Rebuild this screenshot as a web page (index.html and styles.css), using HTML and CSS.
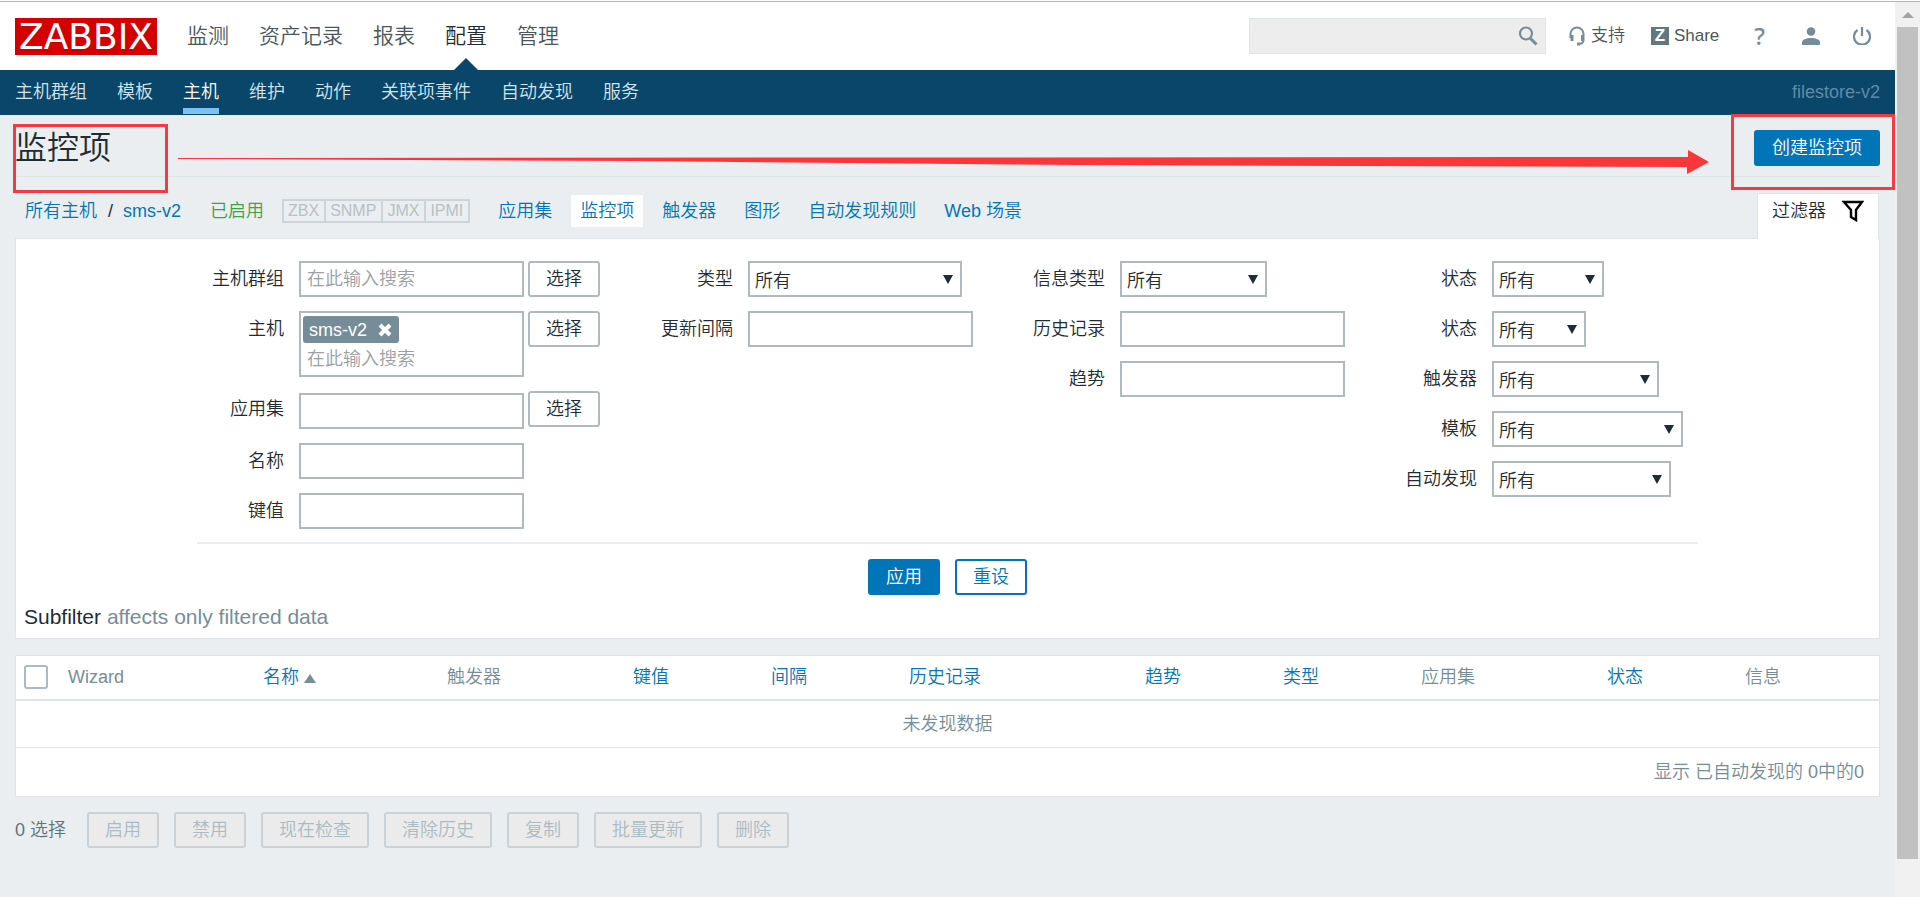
FILE: index.html
```html
<!DOCTYPE html>
<html lang="zh-CN">
<head>
<meta charset="utf-8">
<title>监控项</title>
<link rel="stylesheet" href="styles.css">
</head>
<body>
<div class="window">
<div class="page">
  <header class="header">
    <a class="logo" href="#">ZABBIX</a>
    <nav class="nav">
      <a href="#">监测</a>
      <a href="#">资产记录</a>
      <a href="#">报表</a>
      <a class="selected" href="#">配置</a>
      <a href="#">管理</a>
    </nav>
    <div class="tools">
      <form class="search">
        <input type="text" aria-label="搜索">
        <button type="button" aria-label="搜索"><svg width="20" height="20" viewBox="0 0 20 20" fill="none" stroke="#768d99"><circle cx="8" cy="7.500" r="6" stroke-width="2.200"/><path d="M12.500 12.500 18.500 18.500" stroke-width="3"/></svg></button>
      </form>
      <a class="support" href="#"><svg width="16" height="20" viewBox="0 0 16 20" fill="none" stroke="#768d99"><path d="M1.500 12V8a6.500 6.500 0 0 1 13 0v6q0 3.500-4.500 4" stroke-width="2"/><path d="M3 9v6M13.500 9v6" stroke-width="3"/><path d="M8 18h3" stroke-width="3"/></svg>支持</a>
      <a class="share" href="#"><span class="z">Z</span>Share</a>
      <a class="help" href="#">?</a>
      <a class="icon" href="#" aria-label="用户"><svg width="18" height="18" viewBox="0 0 18 18" fill="#768d99"><circle cx="9" cy="4.500" r="4.300"/><path d="M0 18v-2.500C0 12.500 4 11 9 11s9 1.500 9 4.500V18z"/></svg></a>
      <a class="icon" href="#" aria-label="退出"><svg width="18" height="18" viewBox="0 0 18 18" fill="none" stroke="#768d99" stroke-width="2.200"><path d="M4.500 3A8 8 0 1 0 13.500 3M9 0v9"/></svg></a>
    </div>
  </header>
  <nav class="subnav">
    <a href="#">主机群组</a>
    <a href="#">模板</a>
    <a class="selected" href="#">主机</a>
    <a href="#">维护</a>
    <a href="#">动作</a>
    <a href="#">关联项事件</a>
    <a href="#">自动发现</a>
    <a href="#">服务</a>
    <span class="server">filestore-v2</span>
  </nav>

  <div class="titlebar">
    <h1>监控项</h1>
    <button type="button" class="btn primary">创建监控项</button>
    <span class="mark mark-title"></span>
    <span class="mark mark-create"></span>
    <svg class="mark-arrow" viewBox="0 0 1531 24" preserveAspectRatio="none"><path d="M0 8 1510 7V0L1531 12 1509 24V17L900 15 460 11 0 9z" fill="#fb3639"/></svg>
  </div>

  <main>
    <div class="objectbar">
      <a href="#">所有主机</a><span class="slash">/</span><a href="#">sms-v2</a>
      <span class="enabled">已启用</span>
      <span class="status"><span>ZBX</span><span>SNMP</span><span>JMX</span><span>IPMI</span></span>
      <nav class="tabs">
        <a href="#">应用集</a>
        <a class="selected" href="#">监控项</a>
        <a href="#">触发器</a>
        <a href="#">图形</a>
        <a href="#">自动发现规则</a>
        <a href="#">Web 场景</a>
      </nav>
      <a class="filter-tab" href="#">过滤器<svg width="22" height="22" viewBox="0 0 22 22" fill="none" stroke="#000" stroke-width="2.400"><path d="M2 2h18l-6 8v10l-5-3v-7z"/></svg></a>
    </div>

    <form class="panel filter">
      <div class="fields">
        <div class="col">
          <div class="row"><label for="group">主机群组</label><input id="group" type="text" placeholder="在此输入搜索"><button type="button" class="btn plain">选择</button></div>
          <div class="row"><label for="host">主机</label><div class="multi"><span class="chip">sms-v2<button type="button" aria-label="移除"><svg width="14" height="14" viewBox="0 0 14 14" stroke="#fff" stroke-width="4"><path d="M2 2l10 10M12 2 2 12"/></svg></button></span><input id="host" type="text" placeholder="在此输入搜索"></div><button type="button" class="btn plain">选择</button></div>
          <div class="row app"><label for="app">应用集</label><input id="app" type="text"><button type="button" class="btn plain">选择</button></div>
          <div class="row"><label for="name">名称</label><input id="name" type="text"></div>
          <div class="row"><label for="key">键值</label><input id="key" type="text"></div>
        </div>
        <div class="col">
          <div class="row"><label for="type">类型</label><span class="select w-type"><select id="type"><option>所有</option></select></span></div>
          <div class="row"><label for="delay">更新间隔</label><input id="delay" type="text"></div>
        </div>
        <div class="col">
          <div class="row"><label for="vtype">信息类型</label><span class="select w-info"><select id="vtype"><option>所有</option></select></span></div>
          <div class="row"><label for="history">历史记录</label><input id="history" type="text"></div>
          <div class="row"><label for="trends">趋势</label><input id="trends" type="text"></div>
        </div>
        <div class="col">
          <div class="row"><label for="state">状态</label><span class="select w-state"><select id="state"><option>所有</option></select></span></div>
          <div class="row"><label for="status">状态</label><span class="select w-status"><select id="status"><option>所有</option></select></span></div>
          <div class="row"><label for="trig">触发器</label><span class="select w-trigger"><select id="trig"><option>所有</option></select></span></div>
          <div class="row"><label for="tpl">模板</label><span class="select w-template"><select id="tpl"><option>所有</option></select></span></div>
          <div class="row"><label for="disc">自动发现</label><span class="select w-discovery"><select id="disc"><option>所有</option></select></span></div>
        </div>
      </div>
      <div class="actions">
        <button type="button" class="btn primary">应用</button>
        <button type="button" class="btn outline">重设</button>
      </div>
      <h4>Subfilter <span>affects only filtered data</span></h4>
    </form>

    <table class="panel list">
      <colgroup><col class="c-check"><col class="c-wizard"><col class="c-name"><col class="c-wide"><col class="c-thin"><col class="c-thin"><col class="c-history"><col class="c-thin"><col class="c-thin"><col class="c-wide"><col class="c-thin"><col class="c-last"></colgroup>
      <thead>
        <tr>
          <th class="check"><input type="checkbox" aria-label="全选"></th>
          <th>Wizard</th>
          <th><a href="#">名称<span class="sort"></span></a></th>
          <th>触发器</th>
          <th><a href="#">键值</a></th>
          <th><a href="#">间隔</a></th>
          <th><a href="#">历史记录</a></th>
          <th><a href="#">趋势</a></th>
          <th><a href="#">类型</a></th>
          <th>应用集</th>
          <th><a href="#">状态</a></th>
          <th>信息</th>
        </tr>
      </thead>
      <tbody><tr><td colspan="12">未发现数据</td></tr></tbody>
      <tfoot><tr><td colspan="12">显示 已自动发现的 0中的0</td></tr></tfoot>
    </table>

    <div class="bulk">
      <span>0 选择</span>
      <button type="button" class="btn" disabled>启用</button>
      <button type="button" class="btn" disabled>禁用</button>
      <button type="button" class="btn" disabled>现在检查</button>
      <button type="button" class="btn" disabled>清除历史</button>
      <button type="button" class="btn" disabled>复制</button>
      <button type="button" class="btn" disabled>批量更新</button>
      <button type="button" class="btn" disabled>删除</button>
    </div>
  </main>
</div>
<div class="scrollbar"><span class="up"></span><span class="thumb"></span></div>
</div>
</body>
</html>
```
FILE: styles.css
```css
* { box-sizing: border-box; }
html { background: #fff; }
body {
  margin: 0;
  padding-top: 1px;
  color: #1f2c33;
  font: 350 18px/24px "Liberation Sans", "Noto Sans CJK SC", sans-serif;
}
a { color: #0275b8; text-decoration: none; }
input, select, button { font: inherit; color: inherit; margin: 0; }

.window {
  display: flex;
  min-height: calc(100vh - 1px);
  border-top: 1px solid #b0b6b6;
}
.page { flex: 1; min-width: 0; background: #ebeef0; }

/* header */
.header {
  display: flex;
  align-items: center;
  height: 68px;
  padding: 0 15px;
  background: #fff;
}
.logo {
  padding: 0 4px;
  background: #d40000;
  color: #fff;
  font: 400 36px/37px "DejaVu Sans", sans-serif;
}
.nav { display: flex; align-self: stretch; gap: 30px; margin-left: 30px; }
.nav a {
  position: relative;
  font-size: 21px;
  line-height: 68px;
  color: #4a565c;
}
.nav .selected { color: #1f2c33; }
.nav .selected::after {
  content: "";
  position: absolute;
  bottom: 0;
  left: calc(50% - 12px);
  border: 12px solid transparent;
  border-top: 0;
  border-bottom-color: #0a466a;
}
.tools {
  display: flex;
  align-items: center;
  margin-left: auto;
  padding-right: 9px;
  font-size: 17px;
}
.tools a { display: flex; align-items: center; color: #4a565c; }
.search {
  display: flex;
  align-items: center;
  width: 297px;
  height: 36px;
  padding-right: 7px;
  border: 1px solid #dfe4e7;
  background: #ededed;
}
.search input { flex: 1; min-width: 0; border: 0; background: none; outline: 0; }
.search button { display: flex; padding: 0; border: 0; background: none; }
.support { gap: 6px; margin-left: 23px; }
.share { gap: 5px; margin-left: 26px; }
.z {
  width: 18px;
  background: #617883;
  color: #fff;
  font-weight: 700;
  line-height: 18px;
  text-align: center;
}
.tools .help {
  margin: 0 4px 0 35px;
  color: #768d99;
  font-family: "Noto Sans", sans-serif;
  font-size: 24px;
  font-weight: 500;
}
.icon { margin-left: 33px; }

/* second-level menu */
.subnav {
  display: flex;
  gap: 30px;
  height: 45px;
  padding: 0 15px;
  background: #0a466a;
  line-height: 45px;
}
.subnav a { height: 44px; color: #d2e4ee; }
.subnav .selected { color: #fff; border-bottom: 6px solid #7ec1f2; }
.server { margin-left: auto; color: #5d8ba8; }

/* page title */
.titlebar {
  position: relative;
  display: flex;
  align-items: center;
  justify-content: space-between;
  height: 62px;
  padding: 4px 15px 0;
}
.titlebar::after {
  content: "";
  position: absolute;
  left: 15px;
  right: 15px;
  bottom: 0;
  height: 1px;
  background: #dfe4e7;
}
h1 { margin: 0; font-size: 32px; font-weight: inherit; line-height: 58px; }
.mark { position: absolute; z-index: 2; border: 3px solid #f23c3f; }
.mark-title { top: 9px; left: 13px; width: 155px; height: 69px; }
.mark-create { top: -1px; right: 0; width: 164px; height: 76px; }
.mark-arrow {
  position: absolute;
  z-index: 2;
  top: 35px;
  left: 178px;
  width: calc(100% - 364px);
  height: 24px;
}

/* buttons */
.btn {
  height: 36px;
  padding: 1px 16px 0;
  border: 2px solid #c9d2d7;
  border-radius: 3px;
  background: #ebebeb;
  line-height: 31px;
  white-space: nowrap;
}
.primary { border-color: #0275b8; background: #0275b8; color: #fff; }
.outline { border-color: #0275b8; background: #fff; color: #0275b8; }
.plain { border-color: #b0babe; background: #fff; }
.btn:disabled { color: #acbbc2; }

/* object bar */
main { padding: 0 15px; }
.objectbar { display: flex; align-items: flex-start; padding: 18px 0 0 10px; line-height: 32px; }
.slash { margin: 0 10px 0 11px; }
.enabled { margin-left: 29px; color: #429e47; }
.status {
  display: flex;
  margin: 4px 15px 0 18px;
  border: 2px solid #cdd3d6;
  color: #b8c0c4;
  font-size: 16px;
  line-height: 20px;
}
.status span { padding: 0 5px 0 4px; }
.status span + span { border-left: 2px solid #cdd3d6; }
.tabs { display: flex; gap: 10px; margin-left: 4px; }
.tabs a { padding: 0 9px; }
.tabs .selected { background: #fff; }
.filter-tab {
  display: flex;
  align-items: center;
  gap: 16px;
  height: 46px;
  margin: -2px 1px -1px auto;
  padding: 0 14px 11px 14px;
  border: 1px solid #dfe4e7;
  border-bottom: 0;
  background: #fff;
  color: #1f2c33;
  z-index: 1;
}

/* filter */
.panel { width: 100%; border: 1px solid #dfe4e7; background: #fff; }
.fields {
  display: grid;
  grid-template-columns: 449fr 372fr 372fr 308fr;
  margin: 0 181px;
  padding: 22px 0 13px;
  border-bottom: 2px solid #ebeef0;
}
.col { display: flex; flex-direction: column; gap: 14px; }
.row { display: flex; align-items: flex-start; }
.row label { width: 87px; margin-right: 15px; line-height: 36px; text-align: right; white-space: nowrap; }
.row input, .multi { width: 225px; height: 36px; padding: 0 6px; border: 2px solid #b0babe; background: #fff; }
.row input::placeholder { color: #9aa0a3; opacity: 1; }
.row .plain { margin-left: 4px; }
.row .multi { height: 66px; padding: 3px 2px; }
.row .multi input { width: 100%; height: 32px; padding: 0 4px; border: 0; }
.chip {
  display: flex;
  align-items: center;
  gap: 11px;
  width: fit-content;
  height: 27px;
  padding: 0 7px 0 6px;
  border-radius: 3px;
  background: #768d99;
  color: #fff;
}
.chip button { display: flex; padding: 0; border: 0; background: none; }
.row.app input { margin-top: 2px; }
.select { position: relative; height: 36px; }
.select select {
  width: 100%;
  height: 36px;
  padding: 3px 5px 0;
  border: 2px solid #b0babe;
  border-radius: 0;
  background: #fff;
  appearance: none;
}
.select::after {
  content: "";
  position: absolute;
  top: 14px;
  right: 9px;
  border: 5px solid transparent;
  border-top: 9px solid #1f2c33;
  border-bottom: 0;
  pointer-events: none;
}
.w-type { width: 214px; }
.w-info { width: 147px; }
.w-state { width: 112px; }
.w-status { width: 94px; }
.w-trigger { width: 167px; }
.w-template { width: 191px; }
.w-discovery { width: 179px; }
.actions { display: flex; justify-content: center; gap: 15px; padding-top: 15px; }
h4 { margin: 8px 8px 7px; font-size: 21px; font-weight: 400; line-height: 28px; }
h4 span { color: #768d99; }

/* list */
.list {
  margin-top: 16px;
  table-layout: fixed;
  border-collapse: separate;
  border-spacing: 0;
  color: #768d99;
}
.c-check { width: 44px; }
.c-wizard { width: 195px; }
.c-name { width: 184px; }
.c-wide { width: 186px; }
.c-thin { width: 138px; }
.c-history { width: 236px; }
.list th, .list td { padding: 0 8px; font-weight: inherit; text-align: left; }
.list th { height: 45px; padding-bottom: 2px; border-bottom: 2px solid #dfe4e7; }
.list td { height: 46px; text-align: center; }
.list tfoot td { height: 49px; padding: 0 15px; border-top: 1px solid #dfe4e7; text-align: right; }
.check input {
  display: block;
  width: 24px;
  height: 24px;
  border: 2px solid #acbbc2;
  border-radius: 3px;
  background: #fff;
  appearance: none;
}
.sort {
  display: inline-block;
  margin-left: 5px;
  border: 6px solid transparent;
  border-top: 0;
  border-bottom: 9px solid #768d99;
}

/* bulk actions */
.bulk { display: flex; align-items: center; gap: 15px; margin-top: 15px; color: #5d7480; }
.bulk span { margin-right: 6px; }

/* scroll bar */
.scrollbar {
  display: flex;
  flex-direction: column;
  align-items: center;
  width: 25px;
  padding: 10px 0 38px;
  background: #f1f1f1;
}
.up { border: 6px solid transparent; border-top: 0; border-bottom: 6px solid #a3a3a3; }
.thumb { flex: 1; width: 21px; margin-top: 9px; background: #c1c1c1; }
```
